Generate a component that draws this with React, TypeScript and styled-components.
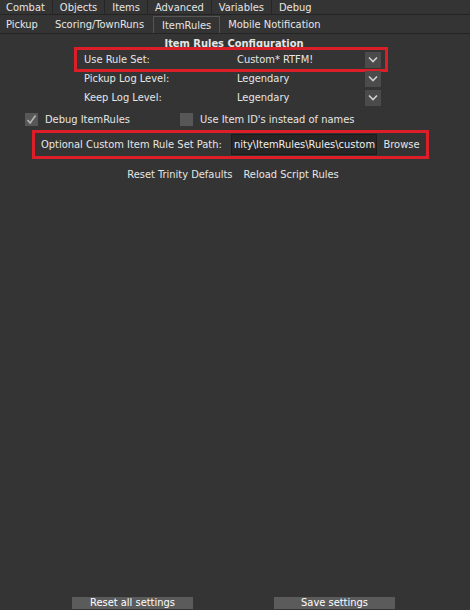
import React from "react";
import styled, { createGlobalStyle } from "styled-components";

const Global = createGlobalStyle`
  html, body { margin: 0; padding: 0; background: #343434; }
  body { font-family: "DejaVu Sans Condensed", "DejaVu Sans", sans-serif; font-size: 11px; color: #e6e6e6; }
`;

const Page = styled.div`
  width: 470px;
  height: 610px;
  display: flex;
  flex-direction: column;
  background: #343434;
  overflow: hidden;
`;

const TabBar = styled.div<{ $h: number; $pad: number }>`
  display: flex;
  height: ${(p) => p.$h}px;
  border-bottom: 1px solid #242424;
  margin-left: ${(p) => 6 - p.$pad}px;
  align-items: stretch;
  & > div {
    padding: 0 ${(p) => p.$pad}px;
  }
`;

const Tab = styled.div<{ $sep?: boolean; $selected?: boolean }>`
  display: flex;
  align-items: center;
  white-space: nowrap;
  line-height: 1;
  border-right: 1px solid ${(p) => (p.$sep ? "#262626" : "transparent")};
  ${(p) =>
    p.$selected
      ? `border: 1px solid #555; border-bottom: none; margin-top: 1px;`
      : ""}
`;

const Title = styled.div`
  height: 13px;
  line-height: 13px;
  text-align: center;
  font-weight: bold;
  margin-top: 3px;
  padding-right: 2px;
`;

const Form = styled.div`
  display: flex;
  flex-direction: column;
  margin-left: 77px;
  width: 308px;
`;

const FormRow = styled.div<{ $highlight?: boolean }>`
  display: flex;
  align-items: center;
  height: 19px;
  padding: 0 4px 0 7px;
  outline: ${(p) => (p.$highlight ? "3px solid #dc1e28" : "none")};
`;

const Label = styled.div`
  flex: 0 0 153px;
`;

const Value = styled.div`
  flex: 1;
`;

const Arrow = styled.div`
  flex: 0 0 16px;
  height: 16px;
  background: #4b4b4b;
  display: flex;
  align-items: center;
  justify-content: center;
`;

const CheckRow = styled.div`
  display: flex;
  align-items: center;
  height: 14px;
  margin-top: 5px;
  padding-left: 25px;
`;

const CheckItem = styled.div<{ $w?: number }>`
  display: flex;
  align-items: center;
  gap: 7px;
  width: ${(p) => (p.$w ? `${p.$w}px` : "auto")};
`;

const Box = styled.div`
  width: 13px;
  height: 13px;
  background: #575757;
  display: flex;
  align-items: center;
  justify-content: center;
`;

const PathRow = styled.div`
  display: flex;
  align-items: center;
  height: 23px;
  margin: 7px 0 0 35px;
  width: 391px;
  outline: 3px solid #dc1e28;
  padding-left: 6px;
  box-sizing: border-box;
`;

const PathLabel = styled.div`
  width: 190px;
  white-space: nowrap;
`;

const PathInput = styled.div`
  width: 146px;
  height: 21px;
  background: #262626;
  border: 1px solid #1c1c1c;
  box-sizing: border-box;
  display: flex;
  align-items: center;
  padding-left: 2px;
  overflow: hidden;
  white-space: nowrap;
  color: #f0f0f0;
`;

const Caret = styled.span`
  display: inline-block;
  width: 1px;
  height: 13px;
  background: #f0f0f0;
  margin-left: 1px;
`;

const BrowseButton = styled.div`
  flex: 1;
  height: 21px;
  margin-left: 1px;
  margin-right: 1px;
  display: flex;
  align-items: center;
  justify-content: center;
  background: #333;
`;

const ActionRow = styled.div`
  display: flex;
  justify-content: center;
  gap: 11px;
  height: 14px;
  align-items: center;
  margin-top: 11px;
  padding-right: 4px;
`;

const Spacer = styled.div`
  flex: 1;
`;

const Footer = styled.div`
  display: flex;
  padding: 0 0 1px 72px;
  gap: 81px;
`;

const FooterButton = styled.div`
  width: 121px;
  height: 12px;
  line-height: 12px;
  background: #5b5b5b;
  color: #fff;
  text-align: center;
`;

const Chevron = () => (
  <svg width="10" height="7" viewBox="0 0 10 7">
    <polyline points="1,1.5 5,5.5 9,1.5" fill="none" stroke="#d0d0d0" strokeWidth="1.6" />
  </svg>
);

const Check = () => (
  <svg width="11" height="11" viewBox="0 0 11 11">
    <polyline points="1.5,6 4.2,9 9.5,1.5" fill="none" stroke="#b5b5b5" strokeWidth="1.6" />
  </svg>
);

export default function App() {
  return (
    <Page>
      <Global />
      <TabBar $h={14} $pad={7}>
        <Tab $sep>Combat</Tab>
        <Tab $sep>Objects</Tab>
        <Tab $sep>Items</Tab>
        <Tab $sep>Advanced</Tab>
        <Tab $sep>Variables</Tab>
        <Tab>Debug</Tab>
      </TabBar>
      <TabBar $h={18} $pad={8}>
        <Tab>Pickup</Tab>
        <Tab>Scoring/TownRuns</Tab>
        <Tab $selected>ItemRules</Tab>
        <Tab>Mobile Notification</Tab>
      </TabBar>
      <Title>Item Rules Configuration</Title>
      <Form>
        <FormRow $highlight>
          <Label>Use Rule Set:</Label>
          <Value>Custom* RTFM!</Value>
          <Arrow><Chevron /></Arrow>
        </FormRow>
        <FormRow>
          <Label>Pickup Log Level:</Label>
          <Value>Legendary</Value>
          <Arrow><Chevron /></Arrow>
        </FormRow>
        <FormRow>
          <Label>Keep Log Level:</Label>
          <Value>Legendary</Value>
          <Arrow><Chevron /></Arrow>
        </FormRow>
      </Form>
      <CheckRow>
        <CheckItem $w={155}>
          <Box><Check /></Box>
          Debug ItemRules
        </CheckItem>
        <CheckItem>
          <Box />
          Use Item ID's instead of names
        </CheckItem>
      </CheckRow>
      <PathRow>
        <PathLabel>Optional Custom Item Rule Set Path:</PathLabel>
        <PathInput>
          nity\ItemRules\Rules\custom<Caret />
        </PathInput>
        <BrowseButton>Browse</BrowseButton>
      </PathRow>
      <ActionRow>
        <span>Reset Trinity Defaults</span>
        <span>Reload Script Rules</span>
      </ActionRow>
      <Spacer />
      <Footer>
        <FooterButton>Reset all settings</FooterButton>
        <FooterButton>Save settings</FooterButton>
      </Footer>
    </Page>
  );
}
